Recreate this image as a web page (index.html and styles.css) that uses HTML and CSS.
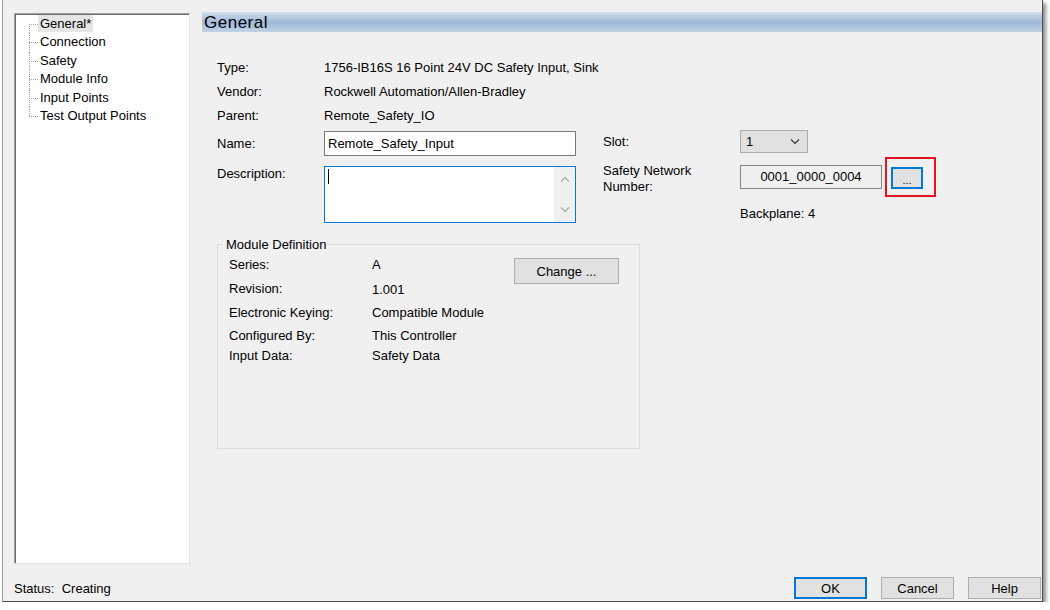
FILE: index.html
```html
<!DOCTYPE html>
<html lang="en">
<head>
    <meta charset="UTF-8">
    <title>Module Properties - General</title>
    <link rel="stylesheet" href="styles.css">
</head>
<body>
    <div class="dialog">
        <div class="main">
            <div class="tree">
                <ul>
                    <li><span class="selected">General*</span></li>
                    <li><span>Connection</span></li>
                    <li><span>Safety</span></li>
                    <li><span>Module Info</span></li>
                    <li><span>Input Points</span></li>
                    <li><span>Test Output Points</span></li>
                </ul>
            </div>

            <div class="content">
                <div class="page-title">General</div>

                <div class="form">
                    <div class="left">
                        <div class="row"><span class="label">Type:</span><span>1756-IB16S 16 Point 24V DC Safety Input, Sink</span></div>
                        <div class="row"><span class="label">Vendor:</span><span>Rockwell Automation/Allen-Bradley</span></div>
                        <div class="row"><span class="label">Parent:</span><span>Remote_Safety_IO</span></div>
                        <div class="row name-row">
                            <span class="label">Name:</span>
                            <div class="textbox">Remote_Safety_Input</div>
                        </div>
                        <div class="row desc-row">
                            <span class="label">Description:</span>
                            <div class="textarea">
                                <div class="text"><span class="caret"></span></div>
                                <div class="scrollbar">
                                    <svg width="10" height="6" viewBox="0 0 10 6"><path d="M1 5.5 L5 1.5 L9 5.5" fill="none" stroke="#a6a6a6" stroke-width="1.2"/></svg>
                                    <svg width="10" height="6" viewBox="0 0 10 6"><path d="M1 0.5 L5 4.5 L9 0.5" fill="none" stroke="#a6a6a6" stroke-width="1.2"/></svg>
                                </div>
                            </div>
                        </div>
                    </div>

                    <div class="right">
                        <div class="slot-row">
                            <span class="rlabel">Slot:</span>
                            <div class="select">
                                <span>1</span>
                                <svg width="10" height="6" viewBox="0 0 10 6"><path d="M1 0.5 L5 4.5 L9 0.5" fill="none" stroke="#333" stroke-width="1.1"/></svg>
                            </div>
                        </div>
                        <div class="snn-row">
                            <span class="rlabel two-line">Safety Network<br>Number:</span>
                            <div class="snn-field">0001_0000_0004</div>
                            <div class="snn-btn-wrap">
                                <button class="btn snn-btn">...</button>
                            </div>
                        </div>
                        <div class="backplane">Backplane: 4</div>
                    </div>
                </div>

                <fieldset class="module-def">
                    <legend>Module Definition</legend>
                    <div class="def-body">
                        <div class="def-grid">
                            <span>Series:</span><span>A</span>
                            <span>Revision:</span><span class="low">1.001</span>
                            <span>Electronic Keying:</span><span>Compatible Module</span>
                            <span>Configured By:</span><span>This Controller</span>
                            <span>Input Data:</span><span>Safety Data</span>
                        </div>
                        <button class="btn change-btn">Change ...</button>
                    </div>
                </fieldset>
            </div>
        </div>

        <div class="footer">
            <div class="status">Status:&nbsp; Creating</div>
            <div class="buttons">
                <button class="btn default">OK</button>
                <button class="btn">Cancel</button>
                <button class="btn">Help</button>
            </div>
        </div>
    </div>
</body>
</html>
```

FILE: styles.css
```css
* {
    box-sizing: border-box;
}

body {
    margin: 0;
    background: #ffffff;
    font-family: 'Liberation Sans', Arial, sans-serif;
    font-size: 13px;
    color: #000;
}

.dialog {
    width: 1041px;
    height: 602px;
    margin-left: 2px;
    background: #f0f0f0;
    border-left: 1px solid #9c9c9c;
    border-right: 1px solid #4e4e4e;
    border-bottom: 1px solid #4e4e4e;
    box-shadow: 3px 3px 4px rgba(0, 0, 0, 0.45);
    display: flex;
    flex-direction: column;
}

.main {
    display: flex;
    padding-top: 12px;
    height: 564px;
}

/* left navigation tree */
.tree {
    margin: 1px 0 0 11px;
    width: 176px;
    height: 551px;
    background: #fff;
    border-top: 1px solid #a0a0a0;
    border-left: 1px solid #a0a0a0;
    border-right: 1px solid #e3e3e3;
    border-bottom: 1px solid #e3e3e3;
    box-shadow: inset 1px 1px 0 #6d6d6d;
}

.tree ul {
    list-style: none;
    margin: 0;
    padding: 1px 0 0 14px;
}

.tree li {
    position: relative;
    height: 18.4px;
    line-height: 18.4px;
}

.tree li::before {
    content: '';
    position: absolute;
    left: 0;
    top: 9px;
    width: 9px;
    border-top: 1px dotted #a0a0a0;
}

.tree li::after {
    content: '';
    position: absolute;
    left: 0;
    top: 0;
    bottom: 0;
    border-left: 1px dotted #a0a0a0;
}

.tree li:first-child::after {
    top: 9px;
}

.tree li:last-child::after {
    bottom: 9px;
}

.tree li span {
    margin-left: 9px;
    padding: 1px 2px;
}

.tree li span.selected {
    background: #e5e5e5;
}

/* right content */
.content {
    flex: 1;
    margin-left: 12px;
}

.page-title {
    height: 20px;
    line-height: 20px;
    padding-left: 2px;
    font-size: 17px;
    letter-spacing: 0.5px;
    background: linear-gradient(#cbd9e9, #a0b9d6 50%, #c3d3e5);
    border-top: 1px solid #d6e0ec;
}

.form {
    display: flex;
    margin-top: 23px;
    padding-left: 15px;
}

.left {
    width: 359px;
}

.row {
    display: flex;
    align-items: center;
    height: 24px;
    white-space: nowrap;
}

.label {
    width: 107px;
    flex-shrink: 0;
}

.name-row {
    margin-top: 4px;
    height: 25px;
}

.textbox {
    width: 252px;
    height: 25px;
    line-height: 23px;
    padding-left: 3px;
    background: #fff;
    border: 1px solid #7a7a7a;
}

.desc-row {
    margin-top: 10px;
    height: 57px;
    align-items: flex-start;
}

.desc-row .label {
    line-height: 16px;
}

.textarea {
    display: flex;
    width: 252px;
    height: 57px;
    background: #fff;
    border: 1px solid #0078d7;
}

.textarea .text {
    flex: 1;
    padding: 2px 0 0 3px;
}

.caret {
    display: block;
    width: 1px;
    height: 15px;
    background: #000;
}

.scrollbar {
    width: 21px;
    background: #f0f0f0;
    display: flex;
    flex-direction: column;
    justify-content: space-between;
    align-items: center;
    padding: 9px 0 9px;
}

.right {
    margin-left: 27px;
    padding-top: 75px;
    white-space: nowrap;
}

.rlabel {
    width: 137px;
    flex-shrink: 0;
}

.slot-row {
    display: flex;
    align-items: center;
    height: 23px;
}

.select {
    width: 68px;
    height: 23px;
    display: flex;
    align-items: center;
    justify-content: space-between;
    padding: 0 7px 0 5px;
    background: #e1e1e1;
    border: 1px solid #adadad;
}

.snn-row {
    display: flex;
    align-items: flex-start;
    margin-top: 12px;
}

.two-line {
    line-height: 16px;
    margin-top: -2px;
}

.snn-field {
    width: 142px;
    height: 24px;
    line-height: 22px;
    text-align: center;
    background: #f0f0f0;
    border: 1px solid #838383;
}

.snn-btn-wrap {
    position: relative;
    margin: 2px 0 0 9px;
}

/* red annotation frame around the browse button */
.snn-btn-wrap::after {
    content: '';
    position: absolute;
    left: -6px;
    top: -10px;
    width: 47px;
    height: 36px;
    border: 2px solid #e3141e;
}

.btn {
    font-family: 'Liberation Sans', Arial, sans-serif;
    font-size: 13px;
    color: #000;
    background: #e1e1e1;
    border: 1px solid #adadad;
    padding: 0;
    width: 73px;
    height: 22px;
}

.btn.default,
.snn-btn {
    border: 1px solid #0078d7;
    box-shadow: inset 0 0 0 1px #0078d7;
}

.snn-btn {
    width: 32px;
    height: 22px;
    font-size: 11px;
    line-height: 24px;
}

.backplane {
    margin: 11px 0 0 137px;
    line-height: 16px;
}

/* module definition group */
.module-def {
    margin: 14px 0 0 15px;
    padding: 0 0 0 5px;
    width: 423px;
    height: 212px;
    border: 1px solid #dcdcdc;
}

.module-def legend {
    padding: 0 3px;
    line-height: 15px;
}

.def-body {
    display: flex;
    align-items: flex-start;
    padding-left: 6px;
}

.def-grid {
    display: grid;
    grid-template-columns: 143px 140px;
    grid-template-rows: 24px 24px 24px 22px 18px;
    align-items: center;
}

.def-grid .low {
    padding-top: 3px;
}

.change-btn {
    width: 105px;
    height: 26px;
    margin: 6px 0 0 2px;
}

/* bottom bar */
.footer {
    display: flex;
    align-items: flex-start;
    padding: 13px 1px 0 11px;
}

.status {
    margin-top: 1px;
    line-height: 22px;
}

.buttons {
    margin-left: auto;
    display: flex;
    gap: 14px;
}
```
